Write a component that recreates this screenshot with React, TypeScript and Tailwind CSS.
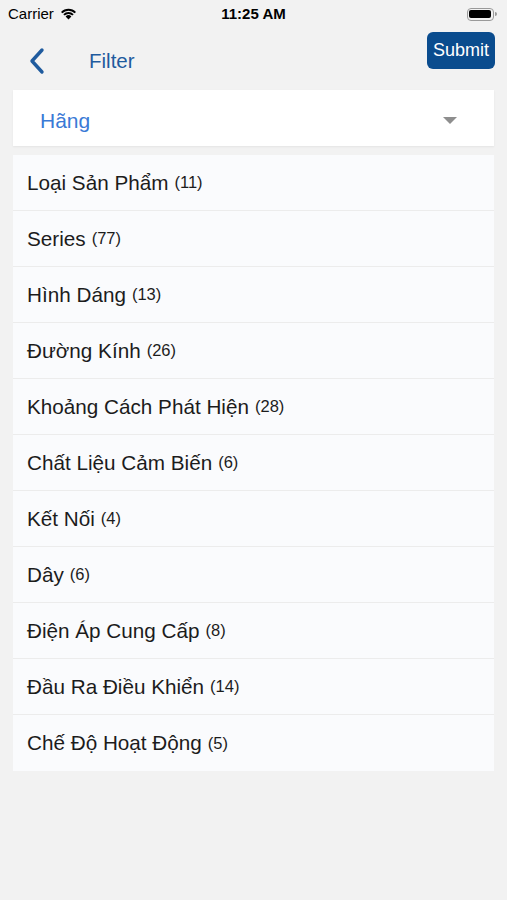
import React from "react";

const items: [string, number][] = [
  ["Loại Sản Phẩm", 11],
  ["Series", 77],
  ["Hình Dáng", 13],
  ["Đường Kính", 26],
  ["Khoảng Cách Phát Hiện", 28],
  ["Chất Liệu Cảm Biến", 6],
  ["Kết Nối", 4],
  ["Dây", 6],
  ["Điện Áp Cung Cấp", 8],
  ["Đầu Ra Điều Khiển", 14],
  ["Chế Độ Hoạt Động", 5],
];

export default function App() {
  return (
    <div
      className="w-[507px] h-[900px] bg-[#f2f2f2] flex flex-col"
      style={{ fontFamily: '"Liberation Sans", Arial, sans-serif' }}
    >
      {/* status bar */}
      <div className="h-[27px] flex items-center justify-between px-[8px] pt-[1px] text-[15px] text-black">
        <div className="flex items-center gap-[6px] w-[120px]">
          <span>Carrier</span>
          <svg width="17" height="12" viewBox="0 0 17 12">
            <path d="M8.5 11.5 L5.6 8.4 A4.2 4.2 0 0 1 11.4 8.4 Z" fill="#000" />
            <path d="M3.3 6.2 A7.4 7.4 0 0 1 13.7 6.2 L12.3 7.6 A5.4 5.4 0 0 0 4.7 7.6 Z" fill="#000" />
            <path d="M1 3.9 A10.6 10.6 0 0 1 16 3.9 L14.6 5.3 A8.6 8.6 0 0 0 2.4 5.3 Z" fill="#000" />
          </svg>
        </div>
        <span className="font-bold">11:25 AM</span>
        <div className="w-[120px] flex justify-end pr-[2px]">
          <div className="flex items-center">
            <div className="w-[27px] h-[13px] rounded-[4px] border border-[#9a9a9a] p-[1.5px]">
              <div className="w-full h-full rounded-[2px] bg-black" />
            </div>
            <div className="w-[2px] h-[4px] bg-[#9a9a9a] rounded-r-sm ml-[1px]" />
          </div>
        </div>
      </div>

      {/* nav bar */}
      <div className="h-[63px] flex items-start px-[12px] relative">
        <div className="flex items-center mt-[19px]">
          <svg width="30" height="30" viewBox="0 0 30 30" className="ml-[13px]">
            <path d="M17 4 L7 15 L17 26" stroke="#1f5b9e" strokeWidth="3.4" fill="none" strokeLinecap="round" strokeLinejoin="round" />
          </svg>
          <span className="ml-[34px] text-[20.5px] text-[#1f5b9e]">Filter</span>
        </div>
        <div className="ml-auto mt-[5px] h-[37px] px-[6px] rounded-[6px] bg-[#0a4c8e] text-white text-[18px] flex items-center pb-[1px]">
          Submit
        </div>
      </div>

      {/* dropdown */}
      <div className="mx-[13px] h-[56px] bg-white flex items-center justify-between pl-[27px] pr-[37px] shadow-[0_1px_2px_rgba(0,0,0,0.06)]">
        <span className="text-[21px] text-[#3a7ad6] mt-[5px]">Hãng</span>
        <svg width="14" height="8" viewBox="0 0 14 8" className="mt-[6px]">
          <path d="M0 0 L14 0 L7 7 Z" fill="#8e8e8e" />
        </svg>
      </div>

      {/* list */}
      <div className="mx-[13px] mt-[9px] bg-[#fafbfd] flex flex-col">
        {items.map(([label, count], i) => (
          <div
            key={label}
            className={`h-[56px] flex items-center pl-[14px] text-[#1c1c1c] ${i < items.length - 1 ? "border-b border-[#ececec]" : ""}`}
          >
            <span className="text-[20.7px]">{label}</span>
            <span className="text-[16.5px] ml-[6px]">({count})</span>
          </div>
        ))}
      </div>
    </div>
  );
}
